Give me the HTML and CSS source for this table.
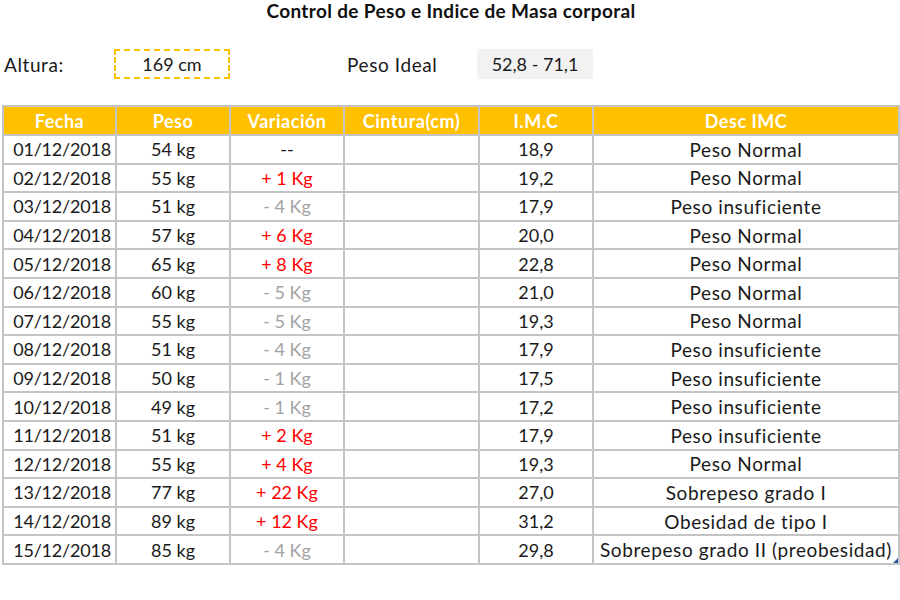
FILE: index.html
```html
<!DOCTYPE html>
<html lang="es">
<head>
<meta charset="utf-8">
<title>Control de Peso</title>
<link rel="stylesheet" href="styles.css">
</head>
<body>
<div class="page">
  <h1 class="title">Control de Peso e Indice de Masa corporal</h1>
  <div class="info">
    <span class="label label-altura">Altura:</span>
    <span class="altura-box">169 cm</span>
    <span class="label label-ideal">Peso Ideal</span>
    <span class="ideal-box">52,8 - 71,1</span>
  </div>
  <table class="grid">
    <colgroup>
      <col class="c1"><col class="c2"><col class="c3"><col class="c4"><col class="c5"><col class="c6">
    </colgroup>
    <thead>
      <tr><th>Fecha</th><th>Peso</th><th>Variación</th><th>Cintura(cm)</th><th>I.M.C</th><th>Desc IMC</th></tr>
    </thead>
    <tbody>
      <tr><td class="date">01/12/2018</td><td>54 kg</td><td>--</td><td></td><td>18,9</td><td class="desc">Peso Normal</td></tr>
      <tr><td class="date">02/12/2018</td><td>55 kg</td><td class="up">+ 1 Kg</td><td></td><td>19,2</td><td class="desc">Peso Normal</td></tr>
      <tr><td class="date">03/12/2018</td><td>51 kg</td><td class="down">- 4 Kg</td><td></td><td>17,9</td><td class="desc">Peso insuficiente</td></tr>
      <tr><td class="date">04/12/2018</td><td>57 kg</td><td class="up">+ 6 Kg</td><td></td><td>20,0</td><td class="desc">Peso Normal</td></tr>
      <tr><td class="date">05/12/2018</td><td>65 kg</td><td class="up">+ 8 Kg</td><td></td><td>22,8</td><td class="desc">Peso Normal</td></tr>
      <tr><td class="date">06/12/2018</td><td>60 kg</td><td class="down">- 5 Kg</td><td></td><td>21,0</td><td class="desc">Peso Normal</td></tr>
      <tr><td class="date">07/12/2018</td><td>55 kg</td><td class="down">- 5 Kg</td><td></td><td>19,3</td><td class="desc">Peso Normal</td></tr>
      <tr><td class="date">08/12/2018</td><td>51 kg</td><td class="down">- 4 Kg</td><td></td><td>17,9</td><td class="desc">Peso insuficiente</td></tr>
      <tr><td class="date">09/12/2018</td><td>50 kg</td><td class="down">- 1 Kg</td><td></td><td>17,5</td><td class="desc">Peso insuficiente</td></tr>
      <tr><td class="date">10/12/2018</td><td>49 kg</td><td class="down">- 1 Kg</td><td></td><td>17,2</td><td class="desc">Peso insuficiente</td></tr>
      <tr><td class="date">11/12/2018</td><td>51 kg</td><td class="up">+ 2 Kg</td><td></td><td>17,9</td><td class="desc">Peso insuficiente</td></tr>
      <tr><td class="date">12/12/2018</td><td>55 kg</td><td class="up">+ 4 Kg</td><td></td><td>19,3</td><td class="desc">Peso Normal</td></tr>
      <tr><td class="date">13/12/2018</td><td>77 kg</td><td class="up">+ 22 Kg</td><td></td><td>27,0</td><td class="desc">Sobrepeso grado I</td></tr>
      <tr><td class="date">14/12/2018</td><td>89 kg</td><td class="up">+ 12 Kg</td><td></td><td>31,2</td><td class="desc">Obesidad de tipo I</td></tr>
      <tr><td class="date">15/12/2018</td><td>85 kg</td><td class="down">- 4 Kg</td><td></td><td>29,8</td><td class="desc last">Sobrepeso grado II (preobesidad)<span class="handle"></span></td></tr>
    </tbody>
  </table>
</div>
</body>
</html>
```
FILE: styles.css
```css
html, body {
  margin: 0;
  padding: 0;
  background: #ffffff;
}
body {
  font-family: Lato, "Open Sans", sans-serif;
  color: #1a1a1a;
  font-size: 19px;
  letter-spacing: 0.6px;
}
.page {
  width: 900px;
  height: 600px;
  box-sizing: border-box;
  padding: 0 0 0 2px;
}
.title {
  margin: 0;
  height: 22px;
  line-height: 22px;
  font-size: 19px;
  letter-spacing: 0.35px;
  font-weight: 700;
  text-align: center;
  color: #111;
}
.info {
  display: flex;
  align-items: center;
  height: 30px;
  margin-top: 27px;
}
.label-altura {
  width: 112px;
  padding-left: 2px;
  box-sizing: border-box;
}
.altura-box {
  width: 116px;
  height: 30px;
  box-sizing: border-box;
  border: 2px dashed #ffc000;
  display: flex;
  align-items: center;
  justify-content: center;
  font-size: 18px;
  letter-spacing: 0;
}
.label-ideal {
  width: 130px;
  padding-left: 117px;
  box-sizing: content-box;
}
.ideal-box {
  width: 116px;
  height: 30px;
  background: #f2f2f2;
  display: flex;
  align-items: center;
  justify-content: center;
  font-size: 18px;
  letter-spacing: 0;
}
.grid {
  margin-top: 26px;
  border-collapse: collapse;
  table-layout: fixed;
  width: 896px;
}
.c1 { width: 113px; }
.c2 { width: 114px; }
.c3 { width: 114px; }
.c4 { width: 135px; }
.c5 { width: 114px; }
.c6 { width: 306px; }
.grid th, .grid td {
  border: 2px solid #c4c4c4;
  padding: 0 4px;
  text-align: center;
  white-space: nowrap;
  font-size: 18px;
  letter-spacing: 0;
}
.grid th {
  background: #ffc000;
  color: #ffffff;
  font-weight: 700;
  height: 27px;
  letter-spacing: 0.5px;
}
.grid td {
  height: 26.6px;
}
.grid td.date {
  text-align: right;
  padding-right: 4px;
  letter-spacing: -0.2px;
}
.grid td.desc {
  font-size: 19px;
  letter-spacing: 0.6px;
}
.grid td.up { color: #ff0000; }
.grid td.down { color: #a3a3a3; }
.grid td.last {
  position: relative;
  padding: 0;
}
.handle {
  position: absolute;
  right: 0;
  bottom: 0;
  width: 0;
  height: 0;
  border-left: 5px solid transparent;
  border-bottom: 5px solid #2b579a;
}
```
